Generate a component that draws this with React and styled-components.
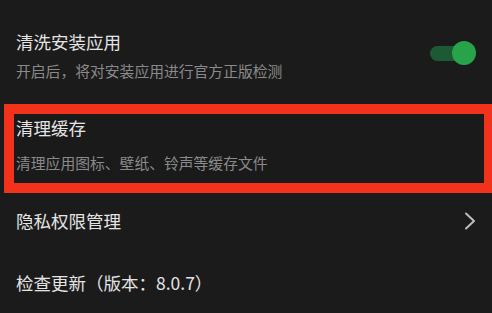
import React from "react";
import styled, { createGlobalStyle } from "styled-components";

const GlobalStyle = createGlobalStyle`
  html, body {
    margin: 0;
    padding: 0;
    background: #1b1b1b;
  }
  body {
    font-family: "Noto Sans CJK SC", "Noto Sans", sans-serif;
    overflow: hidden;
  }
`;

const Page = styled.div`
  width: 492px;
  height: 313px;
  background: #1b1b1b;
  padding-top: 30px;
  box-sizing: border-box;
  overflow: hidden;
`;

const Row = styled.div`
  display: flex;
  align-items: center;
  justify-content: space-between;
  padding: 0 16px;
  margin-top: ${(p) => p.$top || 0}px;
`;

const Texts = styled.div`
  display: flex;
  flex-direction: column;
  gap: ${(p) => p.$gap || 7}px;
`;

const Title = styled.div`
  font-size: 17.5px;
  line-height: 24px;
  color: #e4e4e4;
  white-space: nowrap;
`;

const Sub = styled.div`
  font-size: 14.8px;
  line-height: 20px;
  color: #8a8a8a;
  white-space: nowrap;
`;

const Highlight = styled.div`
  margin: 23px -2px 0 4px;
  border: 10px solid #f2321a;
  padding: 2px 2px 10px;
  background: #1a1a1a;
`;

const Toggle = styled.div`
  position: relative;
  width: 46px;
  height: 24px;
  margin-top: -5px;
`;

const Track = styled.div`
  position: absolute;
  left: 0;
  right: 4px;
  top: 5px;
  height: 15px;
  border-radius: 8px;
  background: #1c5a34;
`;

const Knob = styled.div`
  position: absolute;
  right: 0;
  top: 0;
  width: 24px;
  height: 24px;
  border-radius: 50%;
  background: #27a449;
`;

const Chevron = () => (
  <svg width="12" height="18" viewBox="0 0 12 18" fill="none">
    <path d="M2 1.5 L10 9 L2 16.5" stroke="#bdbdbd" strokeWidth="2" strokeLinecap="round" strokeLinejoin="round" />
  </svg>
);

export default function App() {
  return (
    <Page>
      <GlobalStyle />
      <Row>
        <Texts>
          <Title>清洗安装应用</Title>
          <Sub>开启后，将对安装应用进行官方正版检测</Sub>
        </Texts>
        <Toggle>
          <Track />
          <Knob />
        </Toggle>
      </Row>
      <Highlight>
        <Texts $gap={13}>
          <Title>清理缓存</Title>
          <Sub>清理应用图标、壁纸、铃声等缓存文件</Sub>
        </Texts>
      </Highlight>
      <Row $top={16}>
        <Title>隐私权限管理</Title>
        <Chevron />
      </Row>
      <Row $top={38}>
        <Title>检查更新（版本：8.0.7）</Title>
      </Row>
    </Page>
  );
}
